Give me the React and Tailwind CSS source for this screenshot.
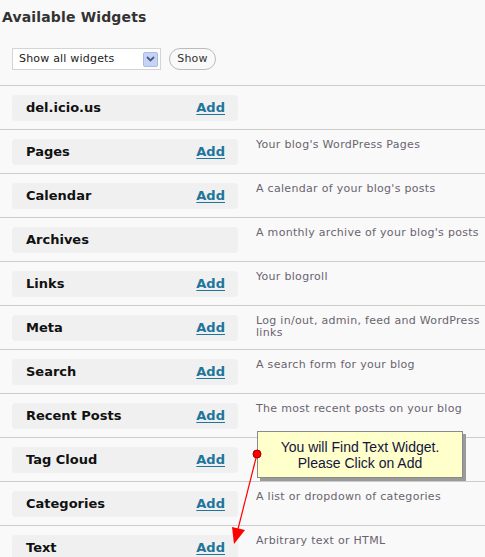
import React from "react";

const rows = [
  { name: "del.icio.us", add: true, desc: [] },
  { name: "Pages", add: true, desc: ["Your blog's WordPress Pages"] },
  { name: "Calendar", add: true, desc: ["A calendar of your blog's posts"] },
  { name: "Archives", add: false, desc: ["A monthly archive of your blog's posts"] },
  { name: "Links", add: true, desc: ["Your blogroll"] },
  { name: "Meta", add: true, desc: ["Log in/out, admin, feed and WordPress", "links"] },
  { name: "Search", add: true, desc: ["A search form for your blog"] },
  { name: "Recent Posts", add: true, desc: ["The most recent posts on your blog"] },
  { name: "Tag Cloud", add: true, desc: [] },
  { name: "Categories", add: true, desc: ["A list or dropdown of categories"] },
  { name: "Text", add: true, desc: ["Arbitrary text or HTML"] },
];

export default function App() {
  return (
    <div
      className="relative w-[485px] h-[557px] overflow-hidden bg-[#f9f9f9]"
      style={{ fontFamily: '"DejaVu Sans", Verdana, sans-serif' }}
    >
      <h2 className="pl-[2px] pt-[7px] text-[14px] font-bold leading-[20px] tracking-[0.15px] text-[#333]">
        Available Widgets
      </h2>
      <div className="flex items-center gap-[8px] pl-[12px] pt-[21px] pb-[15px]">
        <div className="flex h-[22px] w-[149px] items-center justify-between border border-[#d4d4d4] bg-white pl-[6px] pr-[2px]">
          <span className="text-[11px] tracking-[0.2px] text-[#222]">Show all widgets</span>
          <span className="flex h-[15px] w-[15px] items-center justify-center rounded-[2px] border border-[#a8bce8] bg-[#c5d4f5]">
            <svg width="9" height="6" viewBox="0 0 9 6">
              <path d="M1 1 L4.5 4.5 L8 1" stroke="#4a5a88" strokeWidth="1.8" fill="none" />
            </svg>
          </span>
        </div>
        <div className="flex h-[22px] w-[47px] items-center justify-center rounded-full border border-[#bbb] bg-[#f9f9f9] text-[11px] tracking-[0.2px] text-[#333]">
          Show
        </div>
      </div>
      <div>
        {rows.map((r) => (
          <div key={r.name} className="flex border-t border-[#cccccc] h-[44px]">
            <div className="ml-[12px] mt-[9px] flex h-[26px] w-[226px] shrink-0 items-center justify-between rounded-[4px] bg-[#f0f0f0] pl-[14px] pr-[13px]">
              <span className="text-[13px] font-bold text-[#111]">{r.name}</span>
              {r.add && (
                <span className="text-[13px] font-bold text-[#21759b] underline underline-offset-[2px]">
                  Add
                </span>
              )}
            </div>
            <div className="ml-[18px] pt-[9px] text-[11px] leading-[12px] tracking-[0.3px] text-[#6a6470] whitespace-nowrap">
              {r.desc.map((d) => (
                <div key={d}>{d}</div>
              ))}
            </div>
          </div>
        ))}
      </div>

      {/* Callout */}
      <div className="absolute left-[257px] top-[431px] w-[206px] h-[47px] border border-[#8a8a8a] bg-[#ffffcc] shadow-[3px_3px_0_#9a9a9a] flex flex-col items-center justify-center text-[14px] leading-[16px] text-[#14143c]"
        style={{ fontFamily: '"Liberation Sans", Arial, sans-serif' }}
      >
        <div>You will Find Text Widget.</div>
        <div>Please Click on Add</div>
      </div>

      {/* Arrow */}
      <svg className="absolute left-0 top-0 pointer-events-none" width="485" height="557">
        <line x1="257" y1="454" x2="238" y2="529" stroke="#ff0000" strokeWidth="1.2" />
        <polygon points="234,544 232,527 245,530" fill="#ff0000" />
        <circle cx="257" cy="454" r="4" fill="#ff0000" stroke="#a00000" strokeWidth="1" />
      </svg>
    </div>
  );
}
